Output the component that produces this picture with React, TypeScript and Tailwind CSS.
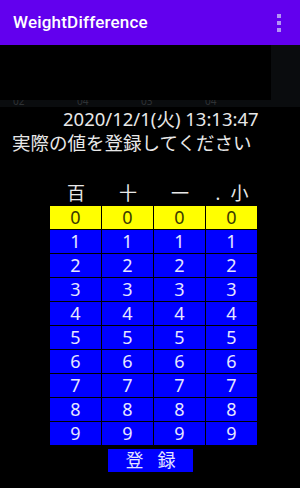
import React from 'react'

const digits = [0, 1, 2, 3, 4, 5, 6, 7, 8, 9]
const cols = ['百', '十', '一', '小']

export default function App() {
  return (
    <div className="w-[300px] h-[488px] bg-black overflow-hidden" style={{ fontFamily: '"Noto Sans", "Noto Sans CJK JP", sans-serif' }}>
      {/* app bar */}
      <div className="h-[45px] bg-[#6200ee] flex items-center justify-between pl-[13px] pr-[19px]">
        <span className="text-white text-[17px] font-medium tracking-[0.2px]" style={{ fontFamily: 'Roboto, sans-serif' }}>WeightDifference</span>
        <div className="flex flex-col gap-[3px]">
          <div className="w-[4px] h-[4px] bg-[#b394f5]" />
          <div className="w-[4px] h-[4px] bg-[#b394f5]" />
          <div className="w-[4px] h-[4px] bg-[#b394f5]" />
        </div>
      </div>

      {/* sample strip with black box over it */}
      <div className="relative h-[62px] bg-[#0a0c0e]">
        <div className="absolute bottom-[1px] left-[13px] flex gap-[24px] text-[10px] text-[#2e3134] leading-none">
          <span className="w-[40px]">sample 02</span>
          <span className="w-[40px]">sample 04</span>
          <span className="w-[40px]">sample 03</span>
          <span className="w-[40px]">sample 04</span>
        </div>
        <div className="absolute left-0 top-0 w-[271px] h-[55px] bg-black" />
      </div>

      {/* date + message */}
      <div className="pl-[63px] text-[18.5px] leading-[24px] text-[#e8e8e8]">2020/12/1(火) 13:13:47</div>
      <div className="pl-[12px] text-[18.5px] leading-[24px] text-[#e8e8e8]">実際の値を登録してください</div>

      {/* column headers */}
      <div className="mt-[27px] ml-[50px] w-[208px] grid grid-cols-4 text-[18px] leading-[22px] text-[#e8e8e8]">
        {cols.map((c, i) => (
          <div key={c} className="text-center">
            {i === 3 ? <span><span className="mr-[10px]">.</span>{c}</span> : c}
          </div>
        ))}
      </div>

      {/* digit grid */}
      <div className="ml-[49px] w-[209px] bg-black flex flex-col gap-[1px] p-[1px] pt-[2px]">
        {digits.map(d => (
          <div key={d} className="grid grid-cols-4 gap-[1px]">
            {cols.map(c => (
              <div
                key={c}
                className={
                  d === 0
                    ? 'h-[23px] bg-[#ffff00] text-[#3a3a00] flex items-center justify-center text-[18px]'
                    : 'h-[23px] bg-[#0000ff] text-[#e6e6ff] flex items-center justify-center text-[18px]'
                }
              >
                {d}
              </div>
            ))}
          </div>
        ))}
      </div>

      {/* register button */}
      <div className="mt-[3px] flex justify-center">
        <div className="ml-[1px] w-[85px] h-[23px] bg-[#0000ff] text-[#e6e6ff] flex items-center justify-center text-[18px] tracking-[14px] pl-[14px]">
          登録
        </div>
      </div>
    </div>
  )
}
